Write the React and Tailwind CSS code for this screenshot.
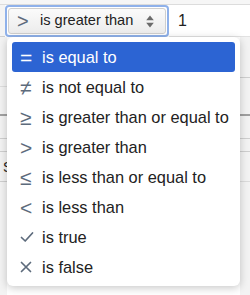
import React from "react";

const options = [
  { icon: "=", label: "is equal to" },
  { icon: "≠", label: "is not equal to" },
  { icon: "≥", label: "is greater than or equal to" },
  { icon: ">", label: "is greater than" },
  { icon: "≤", label: "is less than or equal to" },
  { icon: "<", label: "is less than" },
  { icon: "check", label: "is true" },
  { icon: "x", label: "is false" },
];

const OptionIcon = ({ icon, active }) => {
  const color = active ? "#ffffff" : "#5d6b7c";
  if (icon === "check") {
    return (
      <svg width="14" height="14" viewBox="0 0 14 14" fill="none" stroke={color} strokeWidth="1.7" strokeLinecap="round" strokeLinejoin="round">
        <path d="M1.5 7.5 L5.2 11 L12.5 3" />
      </svg>
    );
  }
  if (icon === "x") {
    return (
      <svg width="12" height="12" viewBox="0 0 12 12" fill="none" stroke={color} strokeWidth="1.7" strokeLinecap="round">
        <path d="M1.5 1.5 L10.5 10.5 M10.5 1.5 L1.5 10.5" />
      </svg>
    );
  }
  return <span className="text-[21px] leading-none" style={{ color }}>{icon}</span>;
};

export default function App() {
  return (
    <div className="relative w-[250px] h-[295px] overflow-hidden bg-white font-['Liberation_Sans',Arial,sans-serif] text-[#222]">
      {/* filter row */}
      <div className="h-[5px] border-b border-[#dcdcdc] bg-[#f6f6f6]" />
      <div className="flex h-[32px]">
        <div className="w-[5px] bg-[#f4f4f4] border-b border-[#d0d0d0]" />
        <div className="w-[164px] rounded-[4px] border-2 border-[#8fb1ea] p-px">
          <div className="flex h-full items-center whitespace-nowrap rounded-[3px] border border-[#cfcfcf] bg-gradient-to-b from-[#fbfbfb] to-[#ececec] pl-[8px] pr-[11px] text-[14.6px]">
            <span className="w-[23px] shrink-0 text-[20px] leading-none text-[#5d6b7c]">&gt;</span>
            <span className="min-w-0 flex-1">is greater than</span>
            <svg className="shrink-0" width="8" height="13" viewBox="0 0 8 13" fill="#6b6b6b">
              <path d="M4 0.5 L7.8 5.2 L0.2 5.2 Z M4 12.5 L7.8 7.8 L0.2 7.8 Z" />
            </svg>
          </div>
        </div>
        <div className="flex flex-1 items-center pl-[9px] text-[16px] border-b border-[#e2e2e2]">1</div>
      </div>

      {/* table behind */}
      <div className="flex h-[258px]">
        <div className="w-[7px] bg-[#f3f3f3] flex flex-col">
          <div className="h-[50px] border-b border-[#dedede]" />
          <div className="h-[29px] border-b-2 border-[#a0a0a0]" />
          <div className="h-[23px] border-b border-[#cfcfcf]" />
          <div className="h-[13px] border-b border-[#cfcfcf]" />
          <div className="h-[30px] border-b border-[#cfcfcf] text-[14px] leading-[30px] pl-[3px]">S</div>
        </div>
        <div className="flex-1 bg-white" />
        <div className="w-[10px] bg-[#f3f3f3] flex flex-col">
          <div className="h-[41px] border-b border-[#cfcfcf]" />
          <div className="h-[38px] border-b-2 border-[#a0a0a0]" />
          <div className="h-[23px] border-b border-[#cfcfcf]" />
          <div className="h-[13px] border-b border-[#cfcfcf]" />
          <div className="h-[30px] border-b border-[#dcdcdc]" />
        </div>
      </div>

      {/* dropdown menu */}
      <div className="absolute left-[7px] top-[37px] w-[233px] rounded-[6px] bg-white px-[5px] pt-[5px] pb-[4px] shadow-[0_2px_8px_rgba(0,0,0,0.22)]">
        {options.map((opt, i) => {
          const active = i === 0;
          return (
            <div
              key={opt.label}
              className={
                active
                  ? "flex h-[30px] items-center whitespace-nowrap rounded-[3px] bg-[#2c64d3] pl-[8px] text-[16.4px] text-white"
                  : "flex h-[30px] items-center whitespace-nowrap pl-[8px] text-[16.4px] text-[#222]"
              }
            >
              <span className="flex w-[22px] items-center justify-start">
                <OptionIcon icon={opt.icon} active={active} />
              </span>
              <span>{opt.label}</span>
            </div>
          );
        })}
      </div>
    </div>
  );
}
